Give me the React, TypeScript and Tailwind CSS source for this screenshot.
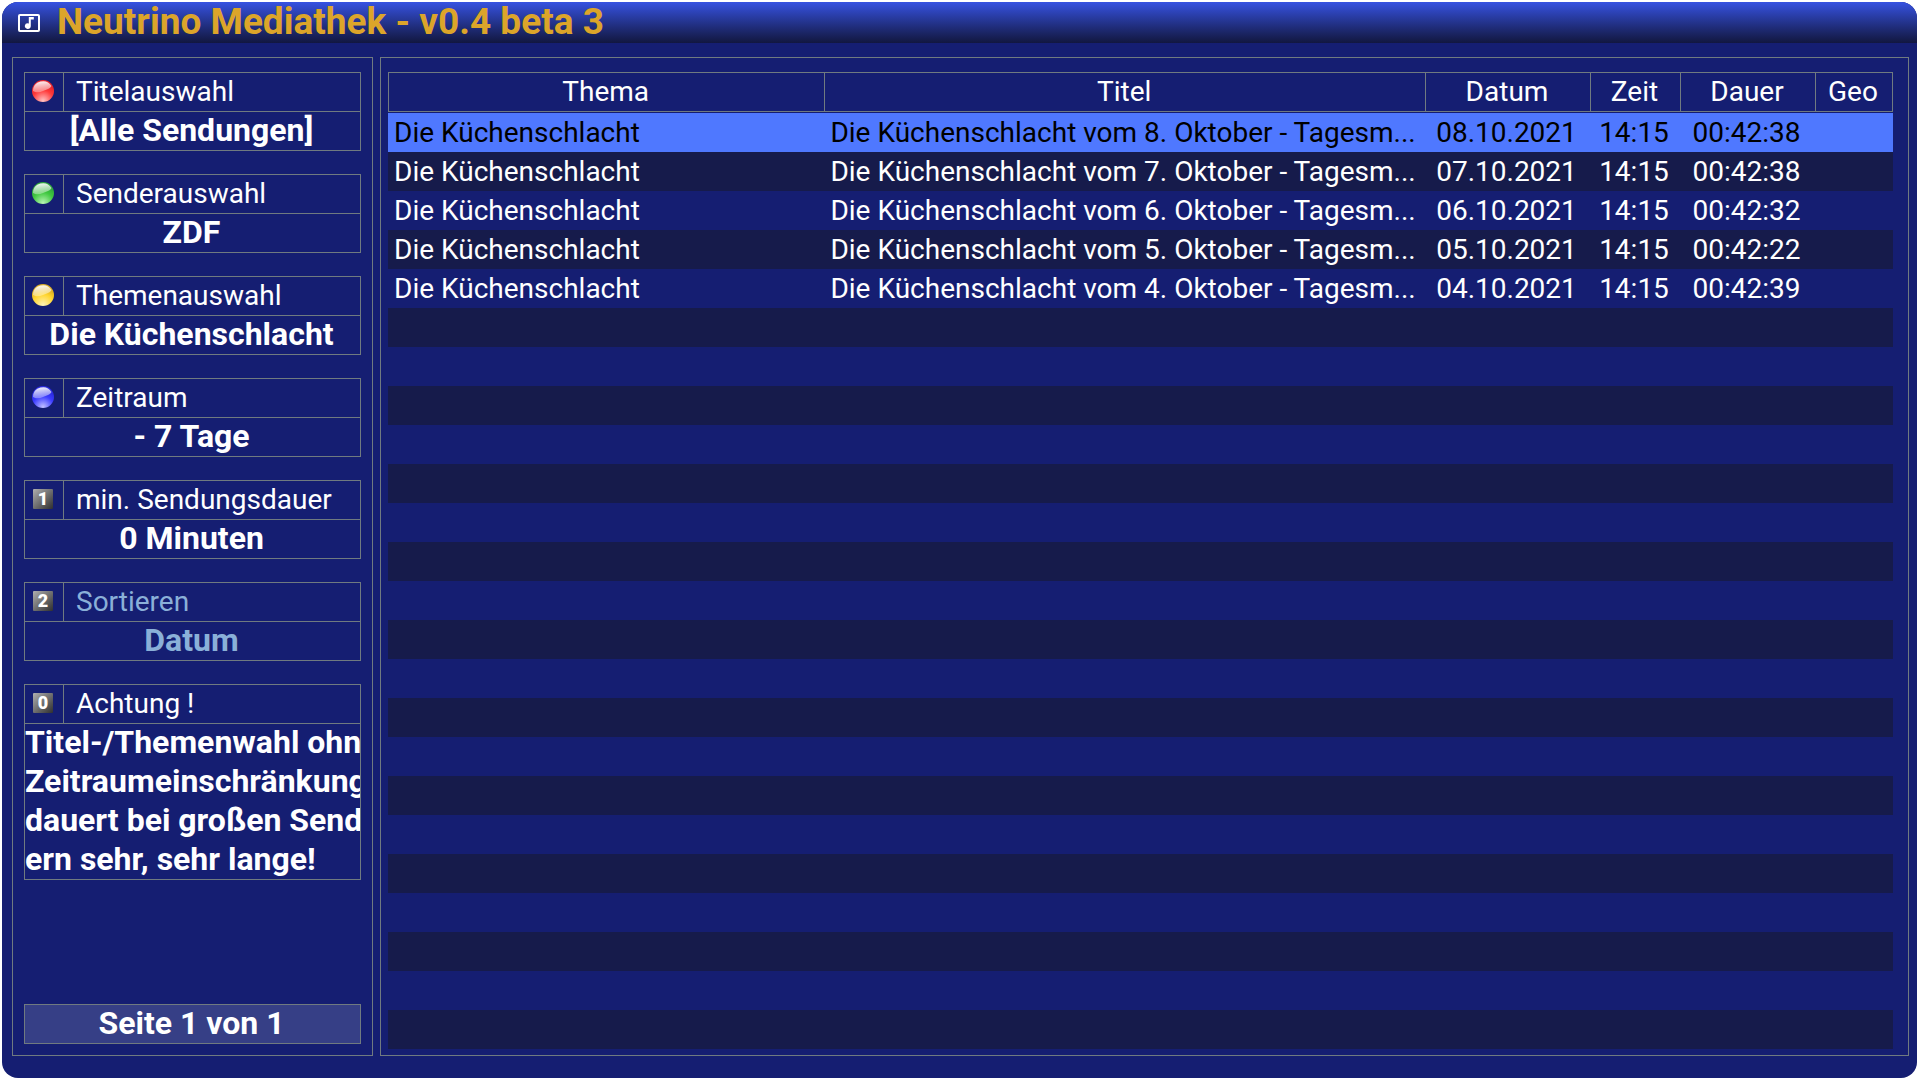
import React from "react";

type Tone = "red" | "green" | "yellow" | "blue";

interface MenuEntry {
  icon: Tone | "0" | "1" | "2";
  label: string;
  lines: string[];
  disabled?: boolean;
}

const menu: MenuEntry[] = [
  { icon: "red", label: "Titelauswahl", lines: ["[Alle Sendungen]"] },
  { icon: "green", label: "Senderauswahl", lines: ["ZDF"] },
  { icon: "yellow", label: "Themenauswahl", lines: ["Die Küchenschlacht"] },
  { icon: "blue", label: "Zeitraum", lines: ["- 7 Tage"] },
  { icon: "1", label: "min. Sendungsdauer", lines: ["0 Minuten"] },
  { icon: "2", label: "Sortieren", lines: ["Datum"], disabled: true },
  {
    icon: "0",
    label: "Achtung !",
    lines: [
      "Titel-/Themenwahl ohne",
      "Zeitraumeinschränkung",
      "dauert bei großen Send-",
      "ern sehr, sehr lange!",
    ],
  },
];

const shows = [
  { day: 8, date: "08.10.2021", time: "14:15", duration: "00:42:38" },
  { day: 7, date: "07.10.2021", time: "14:15", duration: "00:42:38" },
  { day: 6, date: "06.10.2021", time: "14:15", duration: "00:42:32" },
  { day: 5, date: "05.10.2021", time: "14:15", duration: "00:42:22" },
  { day: 4, date: "04.10.2021", time: "14:15", duration: "00:42:39" },
];

const columns = ["Thema", "Titel", "Datum", "Zeit", "Dauer", "Geo"];
const ROWS_PER_PAGE = 24;

const tones: Record<Tone, { base: string; edge: string; glow: string }> = {
  red: { base: "#ff3a3a", edge: "#e8242c", glow: "#ffc4c4" },
  green: { base: "#3fc83f", edge: "#2fa83c", glow: "#b8f5b4" },
  yellow: { base: "#ffd52e", edge: "#dcae24", glow: "#fff3b8" },
  blue: { base: "#3c3cff", edge: "#2a2ae0", glow: "#c0c0ff" },
};

const Ball: React.FC<{ tone: Tone }> = ({ tone }) => {
  const { base, edge, glow } = tones[tone];
  return (
    <svg viewBox="0 0 22 22" className="size-[22px]" aria-hidden="true">
      <defs>
        <radialGradient id={`body-${tone}`} cx="0.5" cy="0.95" r="0.75">
          <stop offset="0" stopColor={glow} />
          <stop offset="0.65" stopColor={base} />
          <stop offset="1" stopColor={edge} />
        </radialGradient>
        <linearGradient id={`shine-${tone}`} x1="0.3" y1="0" x2="0.5" y2="1">
          <stop offset="0" stopColor="#fff" stopOpacity="0.95" />
          <stop offset="1" stopColor="#fff" stopOpacity="0.3" />
        </linearGradient>
      </defs>
      <circle cx="11" cy="11" r="11" fill={`url(#body-${tone})`} />
      <path
        d="M1 11A10 10 0 0 1 19.5 6C18 9 14.5 9.500 11 11C7.500 12.500 4 13 1 11Z"
        fill={`url(#shine-${tone})`}
      />
    </svg>
  );
};

const KeyIcon: React.FC<{ digit: string }> = ({ digit }) => (
  <span className="flex size-5 items-center justify-center rounded-[1px] bg-linear-to-br from-[#b0b0b0] via-[#707070] to-[#303030] text-lg leading-5 font-black text-white">
    {digit}
  </span>
);

const MenuBox: React.FC<{ entry: MenuEntry }> = ({ entry }) => {
  const { icon, label, lines, disabled } = entry;
  const multiline = lines.length > 1;
  return (
    <button
      type="button"
      disabled={disabled}
      className={`block w-full overflow-hidden border border-[#707a80] text-left ${
        disabled ? "text-[#8ab0d8]" : "text-white"
      }`}
    >
      <span className="flex h-[39px] border-b border-[#707a80]">
        <span className="flex w-[39px] shrink-0 items-center justify-center border-r border-[#707a80] pr-0.5 pb-0.5">
          {icon in tones ? <Ball tone={icon as Tone} /> : <KeyIcon digit={icon} />}
        </span>
        <span className="pl-3 text-[28px] leading-[37px] whitespace-nowrap">{label}</span>
      </span>
      {lines.map((line) => (
        <span
          key={line}
          className={`block h-[39px] text-[32px] leading-[37px] font-bold whitespace-nowrap last:h-[38px] ${
            multiline ? "" : "pr-0.5 text-center"
          }`}
        >
          {line}
        </span>
      ))}
    </button>
  );
};

const ShowTable: React.FC = () => (
  <table className="w-full table-fixed border-separate border-spacing-0 text-[28px] leading-[37px] text-white">
    <colgroup>
      <col className="w-[29%]" />
      <col />
      <col className="w-[165px]" />
      <col className="w-[90px]" />
      <col className="w-[135px]" />
      <col className="w-[78px]" />
    </colgroup>
    <thead>
      <tr>
        {columns.map((name) => (
          <th key={name} scope="col" className="group p-0 pb-px font-normal">
            <div className="h-10 border-y border-l border-[#707a80] pr-0.5 group-last:border-r">
              {name}
            </div>
          </th>
        ))}
      </tr>
    </thead>
    <tbody>
      {Array.from({ length: ROWS_PER_PAGE }, (_, i) => {
        const show = shows[i];
        return (
          <tr
            key={i}
            className={`h-[39px] ${
              i === 0 ? "bg-[#4f78ff] text-black" : i % 2 ? "bg-[#161b4b]" : ""
            }`}
          >
            <td className="p-0 pl-1.5 whitespace-nowrap">{show && "Die Küchenschlacht"}</td>
            <td className="p-0 pl-1.5 whitespace-nowrap">
              {show && `Die Küchenschlacht vom ${show.day}. Oktober - Tagesm...`}
            </td>
            <td className="p-0 pr-0.5 text-center">{show?.date}</td>
            <td className="p-0 pr-0.5 text-center">{show?.time}</td>
            <td className="p-0 pr-0.5 text-center">{show?.duration}</td>
            <td className="p-0" />
          </tr>
        );
      })}
    </tbody>
  </table>
);

const App: React.FC = () => {
  return (
    <div className="flex min-h-screen bg-white py-0.5 pr-[3px] pl-0.5 font-[Roboto,sans-serif]">
      <div className="flex min-w-0 flex-1 flex-col rounded-2xl bg-[#151e72]">
        <header className="flex h-[41px] items-center gap-[17px] rounded-t-2xl bg-linear-to-b from-[#3652e2] to-[#121740] pl-4">
          <svg viewBox="0 0 22 18" className="h-[18px] w-[22px]" aria-hidden="true">
            <rect x="1" y="1" width="20" height="16" rx="1" fill="none" stroke="#fff" strokeWidth="2" />
            <path d="M10.800 3h5v2.400h-3V12a3 2.800 0 1 1-2-2.500z" fill="#fff" />
          </svg>
          <h1 className="pb-px text-[37px] leading-10 font-bold whitespace-nowrap text-[#dca52a]">
            Neutrino Mediathek - v0.4 beta 3
          </h1>
        </header>
        <main className="flex flex-1 gap-[7px] pt-3.5 pr-2 pb-[22px] pl-2.5">
          <nav className="flex w-[361px] shrink-0 flex-col gap-[23px] border border-[#707a80] px-[11px] pt-3.5 pb-[11px]">
            {menu.map((entry) => (
              <MenuBox key={entry.label} entry={entry} />
            ))}
            <p className="mt-auto h-10 border border-[#707a80] bg-[#363f86] pr-0.5 text-center text-[32px] leading-[37px] font-bold text-white">
              Seite 1 von 1
            </p>
          </nav>
          <section className="min-w-0 flex-1 border border-[#707a80] pt-3.5 pr-[15px] pb-1.5 pl-[7px]">
            <ShowTable />
          </section>
        </main>
      </div>
    </div>
  );
};

export default App;
